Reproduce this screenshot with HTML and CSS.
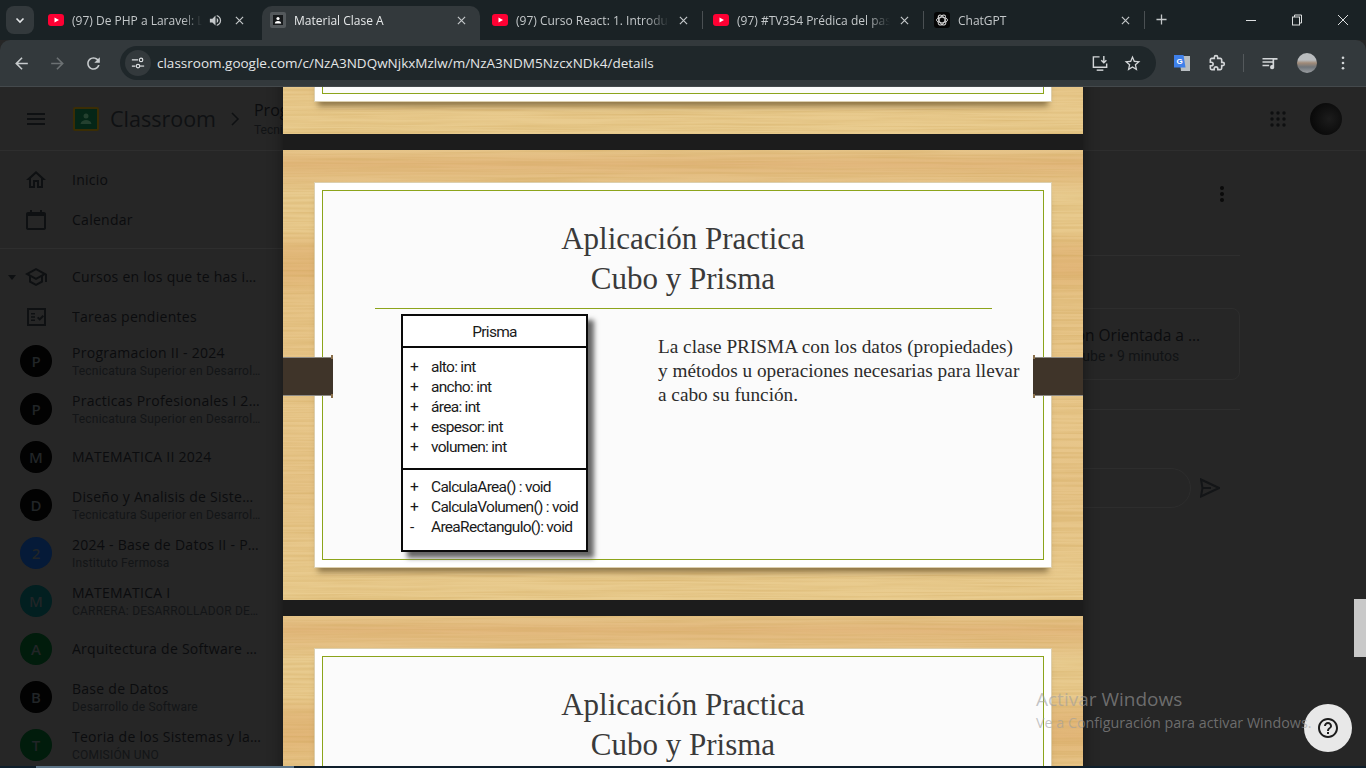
FILE: index.html
```html
<!DOCTYPE html>
<html lang="es">
<head>
  <meta charset="UTF-8">
  <meta name="viewport" content="width=device-width, initial-scale=1.0">
  <title>Material Clase A</title>
  <link rel="stylesheet" href="styles.css">
</head>
<body>

  <!-- wood grain used by the slides -->
  <svg class="defs" width="0" height="0">
    <filter id="wood" x="0" y="0" width="100%" height="100%">
      <feTurbulence type="fractalNoise" baseFrequency="0.006 0.4" numOctaves="3" seed="4"/>
      <feColorMatrix values="0 0 0 0 0.62  0 0 0 0 0.38  0 0 0 0 0.1  0 0 0 0.9 -0.34"/>
    </filter>
  </svg>

  <!-- browser tabs -->
  <div class="tabstrip">
    <div class="tab-search"><svg width="12" height="12" viewBox="0 0 12 12"><path d="M2.5 4.5 6 8l3.5-3.5" fill="none" stroke="#e3e6e8" stroke-width="1.6"/></svg></div>

    <div class="tab tab-gap">
      <svg class="favicon" viewBox="0 0 16 16"><rect y="2" width="16" height="12" rx="3" fill="#ff0033"/><path d="M6.5 5.5v5L11 8z" fill="#fff"/></svg>
      <span class="tab-title">(97) De PHP a Laravel: La ruta completa</span>
      <svg class="tab-sound" viewBox="0 0 24 24"><path d="M3 9v6h4l5 5V4L7 9H3zm13.5 3c0-1.77-1.02-3.29-2.5-4.03v8.05c1.48-.73 2.5-2.25 2.5-4.02zM14 3.23v2.06c2.89.86 5 3.54 5 6.71s-2.11 5.85-5 6.71v2.06c4.01-.91 7-4.49 7-8.77s-2.99-7.86-7-8.77z" fill="#c4c8ca"/></svg>
      <svg class="tab-close" viewBox="0 0 10 10"><path d="M1 1l8 8M9 1l-8 8"/></svg>
    </div>

    <div class="tab tab-gap active">
      <svg class="favicon" viewBox="0 0 16 16"><rect width="16" height="16" rx="2" fill="#54595c"/><rect x="3" y="3" width="10" height="10" fill="#16191b"/><circle cx="8" cy="6.5" r="1.6" fill="#fff"/><path d="M4.8 11.5c.3-2 1.5-2.6 3.2-2.6s2.9.6 3.2 2.6z" fill="#fff"/></svg>
      <span class="tab-title">Material Clase A</span>
      <svg class="tab-close" viewBox="0 0 10 10"><path d="M1 1l8 8M9 1l-8 8"/></svg>
    </div>

    <div class="tab">
      <svg class="favicon" viewBox="0 0 16 16"><rect y="2" width="16" height="12" rx="3" fill="#ff0033"/><path d="M6.5 5.5v5L11 8z" fill="#fff"/></svg>
      <span class="tab-title">(97) Curso React: 1. Introducción a React</span>
      <svg class="tab-close" viewBox="0 0 10 10"><path d="M1 1l8 8M9 1l-8 8"/></svg>
    </div>
    <div class="tab-sep"></div>

    <div class="tab">
      <svg class="favicon" viewBox="0 0 16 16"><rect y="2" width="16" height="12" rx="3" fill="#ff0033"/><path d="M6.5 5.5v5L11 8z" fill="#fff"/></svg>
      <span class="tab-title">(97) #TV354 Prédica del pastor invitado</span>
      <svg class="tab-close" viewBox="0 0 10 10"><path d="M1 1l8 8M9 1l-8 8"/></svg>
    </div>
    <div class="tab-sep"></div>

    <div class="tab">
      <svg class="favicon" viewBox="0 0 16 16"><rect width="16" height="16" rx="3" fill="#050505"/><g fill="none" stroke="#d8d8d8" stroke-width=".9"><ellipse cx="8" cy="8" rx="5.5" ry="2.8"/><ellipse cx="8" cy="8" rx="5.5" ry="2.8" transform="rotate(60 8 8)"/><ellipse cx="8" cy="8" rx="5.5" ry="2.8" transform="rotate(120 8 8)"/></g></svg>
      <span class="tab-title">ChatGPT</span>
      <svg class="tab-close" viewBox="0 0 10 10"><path d="M1 1l8 8M9 1l-8 8"/></svg>
    </div>
    <div class="tab-sep"></div>

    <svg class="new-tab" viewBox="0 0 12 12"><path d="M6 .5v11M.5 6h11"/></svg>

    <div class="window-btns">
      <svg viewBox="0 0 12 12"><path d="M1 6.5h10"/></svg>
      <svg viewBox="0 0 12 12"><rect x="1.5" y="3" width="7" height="8"/><path d="M3.5 3V1h7v8h-2"/></svg>
      <svg viewBox="0 0 12 12"><path d="M1 1l10 10M11 1L1 11"/></svg>
    </div>
  </div>

  <!-- address bar -->
  <div class="toolbar">
    <div class="nav-btns">
      <svg viewBox="0 0 24 24"><path d="M20 11H7.83l5.59-5.59L12 4l-8 8 8 8 1.41-1.41L7.83 13H20v-2z" fill="#c7cbcd"/></svg>
      <svg viewBox="0 0 24 24"><path d="M4 11h12.17l-5.59-5.59L12 4l8 8-8 8-1.41-1.41L16.17 13H4v-2z" fill="#6c7173"/></svg>
      <svg viewBox="0 0 24 24"><path d="M17.65 6.35C16.2 4.9 14.21 4 12 4c-4.42 0-7.99 3.58-7.99 8s3.57 8 7.99 8c3.73 0 6.84-2.55 7.73-6h-2.08c-.82 2.33-3.04 4-5.65 4-3.31 0-6-2.69-6-6s2.69-6 6-6c1.66 0 3.14.69 4.22 1.78L13 11h7V4l-2.35 2.35z" fill="#c7cbcd"/></svg>
    </div>
    <div class="omnibox">
      <span class="site-info"><svg viewBox="0 0 16 16" width="14" height="14"><g fill="none" stroke="#dfe2e4" stroke-width="1.3"><path d="M1 4.5h7M1 11.5h4"/><circle cx="11.5" cy="4.5" r="2"/><circle cx="8" cy="11.5" r="2"/><path d="M10 11.5h5"/></g></svg></span>
      <span class="url">classroom.google.com/c/NzA3NDQwNjkxMzlw/m/NzA3NDM5NzcxNDk4/details</span>
      <svg class="omni-icon" viewBox="0 0 20 20"><g fill="none" stroke="#d3d6d8" stroke-width="1.5"><path d="M9 3H2.5v11h14v-4"/><path d="M6 17h7"/><path d="M13.5 2v7M10.8 6.5l2.7 2.7 2.7-2.7"/></g></svg>
      <svg class="omni-icon" viewBox="0 0 24 24"><path d="M22 9.24l-7.19-.62L12 2 9.19 8.63 2 9.24l5.46 4.73L5.82 21 12 17.27 18.18 21l-1.63-7.03L22 9.24zM12 15.4l-3.76 2.27 1-4.28-3.32-2.88 4.38-.38L12 6.1l1.71 4.04 4.38.38-3.32 2.88 1 4.28L12 15.4z" fill="#d3d6d8"/></svg>
    </div>
    <div class="toolbar-right">
      <svg class="translate" viewBox="0 0 18 18"><path d="M6 2h11v15H8z" fill="#b9bec2"/><path d="M1 1h9.5l2 12.5H1z" fill="#3f80ea"/><text x="3.6" y="10" class="translate-g">G</text></svg>
      <svg class="bar-icon" viewBox="0 0 24 24"><path d="M20.5 11H19V7c0-1.1-.9-2-2-2h-4V3.5C13 2.12 11.88 1 10.5 1S8 2.12 8 3.5V5H4c-1.1 0-1.99.9-1.99 2v3.8H3.5c1.49 0 2.7 1.21 2.7 2.7s-1.21 2.7-2.7 2.7H2V20c0 1.1.9 2 2 2h3.8v-1.5c0-1.49 1.21-2.7 2.7-2.7 1.49 0 2.7 1.21 2.7 2.7V22H17c1.1 0 2-.9 2-2v-4h1.5c1.38 0 2.5-1.12 2.5-2.5S21.88 11 20.5 11z" transform="translate(2.4 2.4) scale(.8)" fill="none" stroke="#d3d6d8" stroke-width="2.4"/></svg>
      <div class="bar-sep"></div>
      <svg class="bar-icon" viewBox="0 0 24 24"><path d="M3 6h12v1.8H3zM3 10h12v1.8H3zM3 14h8v1.8H3zM15 14.5V6h6v2h-4v8.5a2.5 2.5 0 1 1-2-2z" fill="#d3d6d8"/></svg>
      <div class="profile"></div>
      <svg class="bar-kebab" viewBox="0 0 4 16"><circle cx="2" cy="2" r="1.5"/><circle cx="2" cy="8" r="1.5"/><circle cx="2" cy="14" r="1.5"/></svg>
    </div>
  </div>

  <div class="page">

    <!-- classroom behind the viewer -->
    <header class="cr-header">
      <svg class="cr-icon" viewBox="0 0 24 24"><path d="M3 18h18v-2H3v2zm0-5h18v-2H3v2zm0-7v2h18V6H3z"/></svg>
      <svg class="cr-logo" viewBox="0 0 26 24"><rect width="26" height="24" rx="2" fill="#3a2d05"/><rect x="2" y="2" width="22" height="20" fill="#052617"/><circle cx="13" cy="9" r="2.5" fill="#24402f"/><path d="M7.5 17c.5-3 3-4 5.5-4s5 1 5.5 4z" fill="#24402f"/></svg>
      <span class="cr-brand">Classroom</span>
      <svg class="cr-chevron" viewBox="0 0 12 16"><path d="M3 2l6 6-6 6"/></svg>
      <div class="cr-crumb">
        <div class="cr-crumb-title">Programacion II - 2024</div>
        <div class="cr-crumb-sub">Tecnicatura Superior en Desarrollo</div>
      </div>
      <svg class="cr-apps" viewBox="0 0 16 16"><circle cx="2" cy="2" r="1.7"/><circle cx="8" cy="2" r="1.7"/><circle cx="14" cy="2" r="1.7"/><circle cx="2" cy="8" r="1.7"/><circle cx="8" cy="8" r="1.7"/><circle cx="14" cy="8" r="1.7"/><circle cx="2" cy="14" r="1.7"/><circle cx="8" cy="14" r="1.7"/><circle cx="14" cy="14" r="1.7"/></svg>
      <div class="cr-user"></div>
    </header>

    <div class="cr-body">
      <nav class="sidebar">
        <div class="side-group first">
          <div class="side-item">
            <svg class="cr-icon" viewBox="0 0 24 24"><path d="M12 5.69l5 4.5V18h-2v-6H9v6H7v-7.81l5-4.5M12 3L2 12h3v8h6v-6h2v6h6v-8h3L12 3z"/></svg>
            <span class="side-label">Inicio</span>
          </div>
          <div class="side-item">
            <svg class="cr-icon" viewBox="0 0 24 24"><path d="M20 4h-2V2h-2v2H8V2H6v2H4c-1.1 0-2 .9-2 2v14c0 1.1.9 2 2 2h16c1.1 0 2-.9 2-2V6c0-1.1-.9-2-2-2zm0 16H4V8h16v12z"/></svg>
            <span class="side-label">Calendar</span>
          </div>
        </div>
        <div class="side-group courses">
          <div class="side-item">
            <span class="side-caret"></span>
            <svg class="cr-icon" viewBox="0 0 24 24"><path d="M12 3L1 9l4 2.18v6L12 21l7-3.82v-6l2-1.09V17h2V9L12 3zm6.82 6L12 12.72 5.18 9 12 5.28 18.82 9zM17 15.99l-5 2.73-5-2.73v-3.72L12 15l5-2.73v3.72z"/></svg>
            <span class="side-label">Cursos en los que te has inscrito</span>
          </div>
          <div class="side-item">
            <svg class="cr-icon" viewBox="0 0 24 24"><path d="M3 3h19v18H3zM5 5v14h15V5z" fill-rule="evenodd"/><path d="M7 8h4v1.5H7zM7 11.3h4v1.5H7zM7 14.6h4v1.5H7zM13 13l1.3-1.3 1.4 1.4 3-3 1.3 1.3-4.3 4.3z"/></svg>
            <span class="side-label">Tareas pendientes</span>
          </div>

          <div class="course">
            <span class="course-avatar">P</span>
            <div class="course-text"><div class="course-name">Programacion II - 2024</div><div class="course-sub">Tecnicatura Superior en Desarrollo de Software</div></div>
          </div>
          <div class="course">
            <span class="course-avatar">P</span>
            <div class="course-text"><div class="course-name">Practicas Profesionales I 2024</div><div class="course-sub">Tecnicatura Superior en Desarrollo de Software</div></div>
          </div>
          <div class="course">
            <span class="course-avatar">M</span>
            <div class="course-text"><div class="course-name">MATEMATICA II 2024</div></div>
          </div>
          <div class="course">
            <span class="course-avatar">D</span>
            <div class="course-text"><div class="course-name">Diseño y Analisis de Sistemas</div><div class="course-sub">Tecnicatura Superior en Desarrollo de Software</div></div>
          </div>
          <div class="course">
            <span class="course-avatar blue">2</span>
            <div class="course-text"><div class="course-name">2024 - Base de Datos II - Prof. Fermosa</div><div class="course-sub">Instituto Fermosa</div></div>
          </div>
          <div class="course">
            <span class="course-avatar teal">M</span>
            <div class="course-text"><div class="course-name">MATEMATICA I</div><div class="course-sub">CARRERA: DESARROLLADOR DE SOFTWARE</div></div>
          </div>
          <div class="course">
            <span class="course-avatar green">A</span>
            <div class="course-text"><div class="course-name">Arquitectura de Software II 2024</div></div>
          </div>
          <div class="course">
            <span class="course-avatar">B</span>
            <div class="course-text"><div class="course-name">Base de Datos</div><div class="course-sub">Desarrollo de Software</div></div>
          </div>
          <div class="course">
            <span class="course-avatar green">T</span>
            <div class="course-text"><div class="course-name">Teoria de los Sistemas y la Organización</div><div class="course-sub">COMISIÓN UNO</div></div>
          </div>
        </div>
      </nav>

      <main class="material">
        <svg class="material-kebab" viewBox="0 0 4 16"><circle cx="2" cy="2" r="2"/><circle cx="2" cy="8" r="2"/><circle cx="2" cy="14" r="2"/></svg>
        <div class="material-line"></div>
        <div class="video-card">
          <div class="video-title">Programacion Orientada a ...</div>
          <div class="video-sub">Vídeo de YouTube • 9 minutos</div>
        </div>
        <div class="material-line lower"></div>
        <div class="comment-row">
          <div class="comment-input"></div>
          <svg class="comment-send" viewBox="0 0 20 20"><path d="M1 1.5 19 10 1 18.5 2.5 10zM2.5 10H11"/></svg>
        </div>
      </main>
    </div>

    <!-- slides viewer over the dimmed page -->
    <div class="viewer">
      <div class="slide">
        <div class="tape tape-left"></div>
        <div class="tape tape-right"></div>
        <div class="frame"><div class="frame-inner"></div></div>
      </div>

      <div class="slide">
        <div class="tape tape-left"></div>
        <div class="tape tape-right"></div>
        <div class="frame">
          <div class="frame-inner">
            <h2 class="slide-title">Aplicación Practica<br>Cubo y Prisma</h2>
            <div class="slide-rule"></div>
            <div class="slide-body">
              <div class="uml">
                <div class="uml-name">Prisma</div>
                <div class="uml-attrs">
                  <div class="uml-row"><span class="uml-mark">+</span>alto: int</div>
                  <div class="uml-row"><span class="uml-mark">+</span>ancho: int</div>
                  <div class="uml-row"><span class="uml-mark">+</span>área: int</div>
                  <div class="uml-row"><span class="uml-mark">+</span>espesor: int</div>
                  <div class="uml-row"><span class="uml-mark">+</span>volumen: int</div>
                </div>
                <div class="uml-methods">
                  <div class="uml-row"><span class="uml-mark">+</span>CalculaArea() : void</div>
                  <div class="uml-row"><span class="uml-mark">+</span>CalculaVolumen() : void</div>
                  <div class="uml-row"><span class="uml-mark">-</span>AreaRectangulo(): void</div>
                </div>
              </div>
              <p class="slide-text">La clase PRISMA con los datos (propiedades) y métodos u operaciones necesarias para llevar a cabo su función.</p>
            </div>
          </div>
        </div>
      </div>

      <div class="slide">
        <div class="frame">
          <div class="frame-inner">
            <h2 class="slide-title">Aplicación Practica<br>Cubo y Prisma</h2>
          </div>
        </div>
      </div>
    </div>

    <div class="scroll-thumb"></div>

    <div class="help-btn">
      <svg viewBox="0 0 24 24" width="24" height="24"><path d="M11 18h2v-2h-2v2zm1-16C6.48 2 2 6.48 2 12s4.48 10 10 10 10-4.48 10-10S17.52 2 12 2zm0 18c-4.41 0-8-3.59-8-8s3.59-8 8-8 8 3.59 8 8-3.59 8-8 8zm0-14c-2.21 0-4 1.79-4 4h2c0-1.1.9-2 2-2s2 .9 2 2c0 2-3 1.75-3 5h2c0-2.25 3-2.5 3-5 0-2.21-1.79-4-4-4z" fill="#1c1c1c"/></svg>
    </div>

    <div class="activate">
      <div class="activate-title">Activar Windows</div>
      <div class="activate-sub">Ve a Configuración para activar Windows.</div>
    </div>
  </div>

  <div class="taskbar"><div class="taskbar-app"></div></div>

</body>
</html>
```

FILE: styles.css
```css
body{
  margin: 0;
  height: 768px;
  overflow: hidden;
  background-color: #262626;
  font-family: "Open Sans", Arial, sans-serif;
}
.defs{
  display: block;
  height: 0;
}

/* browser chrome */
.tabstrip{
  height: 40px;
  display: flex;
  align-items: flex-start;
  background-color: #1a2225;
  color: #c4c8ca;
  font-size: 12px;
}
.tab-search{
  width: 28px;
  height: 28px;
  margin: 6px 6px 0 6px;
  border-radius: 8px;
  background-color: #33393c;
  display: flex;
  align-items: center;
  justify-content: center;
}
.tab{
  width: 218px;
  height: 34px;
  margin-top: 6px;
  padding: 0 14px 6px 8px;
  box-sizing: border-box;
  display: flex;
  align-items: center;
  border-radius: 10px 10px 0 0;
  flex-shrink: 0;
}
.tab-gap{
  margin-right: 4px;
}
.tab.active{
  background-color: #33393c;
  color: #e6e8e9;
}
.favicon{
  width: 16px;
  height: 16px;
  margin-right: 8px;
  flex-shrink: 0;
}
.tab-title{
  flex: 1;
  white-space: nowrap;
  overflow: hidden;
  -webkit-mask-image: linear-gradient(to right, #000 85%, transparent);
  mask-image: linear-gradient(to right, #000 85%, transparent);
}
.tab-sound{
  width: 15px;
  height: 15px;
  margin: 0 2px 0 6px;
  flex-shrink: 0;
}
.tab-close{
  width: 9px;
  height: 9px;
  margin-left: 10px;
  flex-shrink: 0;
}
.tab-close path{
  stroke: #c4c8ca;
  stroke-width: 1.3;
  fill: none;
}
.tab-sep{
  width: 1px;
  height: 18px;
  margin: 11px 2px 0 0;
  background-color: #4a5053;
  flex-shrink: 0;
}
.new-tab{
  width: 11px;
  height: 11px;
  margin: 14px 0 0 9px;
  flex-shrink: 0;
}
.new-tab path{
  stroke: #c4c8ca;
  stroke-width: 1.4;
}
.window-btns{
  margin-left: auto;
  display: flex;
  gap: 34px;
  padding: 14px 17px 0 0;
}
.window-btns svg{
  width: 12px;
  height: 12px;
  fill: none;
  stroke: #dcdfe0;
  stroke-width: 1;
}

.toolbar{
  height: 47px;
  padding-top: 6px;
  box-sizing: border-box;
  display: flex;
  align-items: flex-start;
  background-color: #33393c;
  border-radius: 10px 10px 0 0;
  border-bottom: 1px solid #44494c;
}
.nav-btns{
  width: 120px;
  height: 34px;
  padding-left: 12px;
  box-sizing: border-box;
  display: flex;
  align-items: center;
  gap: 17px;
  flex-shrink: 0;
}
.nav-btns svg{
  width: 19px;
  height: 19px;
}
.omnibox{
  width: 1036px;
  height: 34px;
  border-radius: 17px;
  background-color: #1f272a;
  display: flex;
  align-items: center;
  padding: 0 14px 0 5px;
  box-sizing: border-box;
}
.site-info{
  width: 26px;
  height: 26px;
  border-radius: 50%;
  background-color: #33393c;
  display: flex;
  align-items: center;
  justify-content: center;
  margin-right: 6px;
}
.url{
  flex: 1;
  font-size: 13.5px;
  color: #e4e6e7;
  white-space: nowrap;
}
.omni-icon{
  width: 19px;
  height: 19px;
  margin-left: 13px;
}
.toolbar-right{
  flex: 1;
  height: 34px;
  display: flex;
  align-items: center;
  padding-left: 17px;
}
.translate{
  width: 18px;
  height: 18px;
  margin-right: 16px;
}
.translate-g{
  font-size: 8px;
  font-weight: 700;
  fill: #fff;
  font-family: "Liberation Sans", sans-serif;
}
.bar-icon{
  width: 20px;
  height: 20px;
}
.bar-sep{
  width: 1px;
  height: 18px;
  background-color: #54595c;
  margin: 0 16px;
}
.profile{
  width: 20px;
  height: 20px;
  margin-left: 17px;
  border-radius: 50%;
  background: linear-gradient(#b9bcbe 35%, #a08a78 50%, #70757a 70%, #9a9da0);
}
.bar-kebab{
  width: 4px;
  height: 14px;
  margin-left: 24px;
  fill: #d3d6d8;
}

/* dimmed classroom page */
.page{
  position: relative;
  height: 679px;
  overflow: hidden;
  background-color: #262626;
}
.cr-header{
  height: 64px;
  display: flex;
  align-items: center;
  padding-left: 24px;
  border-bottom: 1px solid #2e2e2e;
  box-sizing: border-box;
}
.cr-icon{
  width: 24px;
  height: 24px;
  fill: #0e1012;
  flex-shrink: 0;
}
.cr-logo{
  width: 26px;
  height: 24px;
  margin-left: 25px;
}
.cr-brand{
  margin-left: 11px;
  font-size: 21.5px;
  color: #0f1113;
}
.cr-chevron{
  width: 12px;
  height: 16px;
  margin: 0 13px;
  fill: none;
  stroke: #0e1012;
  stroke-width: 1.5;
}
.cr-crumb-title{
  font-size: 16px;
  font-weight: 500;
  line-height: 22px;
  color: #0b0c0e;
  white-space: nowrap;
}
.cr-crumb-sub{
  font-family: Roboto, sans-serif;
  font-size: 12px;
  line-height: 18px;
  color: #111315;
  white-space: nowrap;
}
.cr-apps{
  width: 16px;
  height: 16px;
  margin-left: auto;
  fill: #0e0f10;
}
.cr-user{
  width: 32px;
  height: 32px;
  margin: 0 24px;
  border-radius: 50%;
  background: radial-gradient(circle at 60% 50%, #1c1c1c 0%, #0a0a0a 70%);
}
.cr-body{
  display: flex;
}
.sidebar{
  width: 283px;
  flex-shrink: 0;
}
.side-group{
  padding: 8px 0;
}
.side-group.first{
  padding-top: 9px;
  border-bottom: 1px solid #2e2e2e;
}
.side-item{
  height: 40px;
  display: flex;
  align-items: center;
  padding-left: 24px;
  position: relative;
}
.side-caret{
  position: absolute;
  left: 8px;
  top: 18px;
  border-left: 4.5px solid transparent;
  border-right: 4.5px solid transparent;
  border-top: 5px solid #0e1012;
}
.side-label{
  margin: 0 0 2px 24px;
  width: 189px;
  overflow: hidden;
  text-overflow: ellipsis;
  white-space: nowrap;
  font-size: 14px;
  font-weight: 500;
  letter-spacing: .27px;
  color: #0b0c0e;
}
.course{
  height: 48px;
  display: flex;
  align-items: center;
  padding-left: 20px;
}
.course-avatar{
  width: 32px;
  height: 32px;
  border-radius: 50%;
  background-color: #020202;
  color: #212527;
  font-size: 15px;
  font-weight: 600;
  display: flex;
  align-items: center;
  justify-content: center;
  flex-shrink: 0;
}
.course-avatar.blue{
  background-color: #051a38;
}
.course-avatar.teal{
  background-color: #021f20;
}
.course-avatar.green{
  background-color: #011c0c;
}
.course-text{
  margin-left: 20px;
  width: 189px;
}
.course-name{
  font-size: 14px;
  font-weight: 500;
  letter-spacing: .27px;
  line-height: 20px;
  color: #0b0c0e;
  overflow: hidden;
  text-overflow: ellipsis;
  white-space: nowrap;
}
.course-sub{
  font-family: Roboto, sans-serif;
  font-size: 12px;
  letter-spacing: .2px;
  line-height: 16px;
  color: #131517;
  overflow: hidden;
  text-overflow: ellipsis;
  white-space: nowrap;
}
.material{
  flex: 1;
  padding: 0 126px 0 80px;
  display: flex;
  flex-direction: column;
  align-items: flex-end;
}
.material-kebab{
  width: 4px;
  height: 16px;
  margin: 35px 16px 0 0;
  fill: #0a0a0a;
}
.material-line{
  width: 100%;
  height: 1px;
  margin-top: 53px;
  background-color: #2e2e2e;
}
.material-line.lower{
  margin-top: 29px;
}
.video-card{
  width: 100%;
  height: 72px;
  margin-top: 52px;
  padding: 15px 0 0 629px;
  box-sizing: border-box;
  border: 1px solid #2d2d2d;
  border-radius: 8px;
}
.video-title{
  font-size: 15.5px;
  font-weight: 500;
  line-height: 22px;
  color: #0b0c0e;
  white-space: nowrap;
}
.video-sub{
  font-family: Roboto, sans-serif;
  font-size: 14px;
  line-height: 20px;
  color: #111315;
  white-space: nowrap;
}
.comment-row{
  width: 100%;
  display: flex;
  align-items: center;
  margin-top: 58px;
}
.comment-input{
  flex: 1;
  height: 38px;
  border: 1px solid #2d2d2d;
  border-radius: 20px;
}
.comment-send{
  width: 20px;
  height: 20px;
  margin: 0 20px 0 9px;
  fill: none;
  stroke: #131517;
  stroke-width: 2;
}

/* slides */
.viewer{
  position: absolute;
  left: 283px;
  top: -403px;
  width: 800px;
  display: flex;
  flex-direction: column;
  gap: 16px;
  background-color: #1c1c1c;
  box-shadow: 0 0 14px rgba(0, 0, 0, 0.4);
}
.slide{
  position: relative;
  height: 450px;
  padding: 32px 31px 0;
  box-sizing: border-box;
  flex-shrink: 0;
  overflow: hidden;
  background-image:
    linear-gradient(180deg, #e6c58a 0, #e2b77c 3%, #e8cb8f 10%, #e8c98c 18%, #e3ba7d 22%, #e2b678 27%, #e6c386 33%, #e8c78b 60%, #e6c387 75%, #e9cc8f 100%);
}
.slide::before{
  content: "";
  position: absolute;
  inset: 0;
  background-color: #000;
  filter: url(#wood);
}
.frame{
  position: relative;
  height: 386px;
  padding: 7px;
  box-sizing: border-box;
  background-color: #fff;
  border: 1px solid #dccfae;
  box-shadow: 0 8px 6px -4px rgba(80, 62, 28, 0.6);
}
.frame-inner{
  height: 100%;
  box-sizing: border-box;
  border: 1px solid #8ca41b;
  background-color: #fbfbfb;
  padding-top: 28px;
}
.slide-title{
  margin: 0;
  text-align: center;
  font-family: "Liberation Serif", serif;
  font-weight: 400;
  font-size: 31px;
  line-height: 40px;
  color: #3a3a3a;
}
.slide-rule{
  width: 617px;
  height: 1px;
  margin: 9px 0 0 52px;
  background-color: #8ca41b;
}
.slide-body{
  display: flex;
  align-items: flex-start;
  padding: 5px 0 0 78px;
}
.uml{
  width: 187px;
  height: 238px;
  box-sizing: border-box;
  border: 2px solid #0a0a0a;
  background-color: #fff;
  box-shadow: 6px 6px 5px #666;
  font-family: Roboto, "Liberation Sans", sans-serif;
  font-size: 15.5px;
  letter-spacing: -.7px;
  color: #1a1a1a;
  flex-shrink: 0;
}
.uml-name{
  height: 32px;
  box-sizing: border-box;
  line-height: 32px;
  text-align: center;
  border-bottom: 2px solid #0a0a0a;
}
.uml-attrs{
  height: 122px;
  padding-top: 9px;
  box-sizing: border-box;
  border-bottom: 2px solid #0a0a0a;
}
.uml-methods{
  padding-top: 7px;
}
.uml-row{
  height: 20px;
  line-height: 20px;
  padding-left: 7px;
  display: flex;
  white-space: nowrap;
}
.uml-mark{
  width: 21px;
  flex-shrink: 0;
}
.slide-text{
  margin: 21px 0 0 70px;
  width: 364px;
  font-family: "Liberation Serif", serif;
  font-size: 19.25px;
  line-height: 24px;
  color: #2c2c2c;
}
.tape{
  position: absolute;
  top: 207px;
  width: 50px;
  height: 39px;
  background-color: #3f3429;
  border-top: 1px solid #8d8a84;
  border-bottom: 1px solid #8d8a84;
  box-sizing: border-box;
  z-index: 1;
}
.tape::after{
  content: "";
  position: absolute;
  top: -3px;
  bottom: -3px;
  width: 2px;
  background: linear-gradient(#8a6f4a 0 4px, transparent 4px calc(100% - 4px), #8a6f4a calc(100% - 4px));
}
.tape-left{
  left: 0;
}
.tape-left::after{
  right: 0;
}
.tape-right{
  right: 0;
}
.tape-right::after{
  left: 0;
}

/* things on top of everything */
.scroll-thumb{
  position: absolute;
  right: 0;
  top: 512px;
  width: 12px;
  height: 58px;
  background-color: #c9c9c9;
}
.activate{
  position: absolute;
  left: 1036px;
  top: 599px;
  color: rgba(158, 158, 158, 0.6);
  white-space: nowrap;
}
.activate-title{
  font-size: 19px;
  line-height: 27px;
}
.activate-sub{
  font-size: 14.3px;
  line-height: 20px;
}
.help-btn{
  position: absolute;
  left: 1304px;
  top: 617px;
  width: 48px;
  height: 48px;
  border-radius: 50%;
  background-color: #e8e8e8;
  display: flex;
  align-items: center;
  justify-content: center;
}

.taskbar{
  height: 2px;
  background-color: #0f1f2c;
}
.taskbar-app{
  width: 258px;
  height: 2px;
  margin-left: 36px;
  background-color: #5c7487;
}
```
